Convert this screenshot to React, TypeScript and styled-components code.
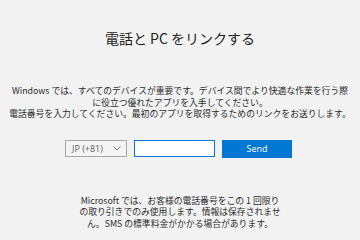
import React from 'react';
import styled, { createGlobalStyle } from 'styled-components';

const GlobalStyle = createGlobalStyle`
  html, body {
    margin: 0;
    padding: 0;
    background: #f2f2f2;
  }
  body {
    font-family: "Noto Sans CJK JP", "Noto Sans", sans-serif;
    color: #262626;
  }
`;

const Page = styled.div`
  width: 360px;
  height: 240px;
  display: flex;
  flex-direction: column;
  align-items: center;
  box-sizing: border-box;
  padding-top: 29px;
  overflow: hidden;
`;

const Title = styled.h1`
  margin: 0;
  font-size: 14px;
  line-height: 18px;
  font-weight: 400;
  color: #1f1f1f;
`;

const Intro = styled.p`
  margin: 38px 0 0;
  width: 356px;
  font-size: 8.8px;
  line-height: 11.5px;
  text-align: center;
  color: #2b2b2b;
`;

const Form = styled.div`
  display: flex;
  align-items: flex-start;
  gap: 7px;
  margin-top: 20px;
  margin-left: -3px;
`;

const Select = styled.div`
  box-sizing: border-box;
  width: 62px;
  height: 17px;
  border: 1px solid #a6a6a6;
  background: #f4f4f4;
  display: flex;
  align-items: center;
  justify-content: space-between;
  padding: 0 5px 0 6px;
  font-family: "Open Sans", "Noto Sans", sans-serif;
  font-size: 9px;
  color: #5c5c5c;
`;

const Input = styled.input`
  box-sizing: border-box;
  width: 81px;
  height: 17px;
  border: 1.5px solid #0078d4;
  background: #fff;
  outline: none;
  padding: 0;
  margin: 0;
`;

const SendButton = styled.button`
  box-sizing: border-box;
  width: 70px;
  height: 18px;
  border: none;
  background: #0078d4;
  color: #fff;
  font-family: "Open Sans", "Noto Sans", sans-serif;
  font-size: 9px;
  padding: 0;
  margin: 0;
`;

const Notice = styled.p`
  margin: 37px 0 0;
  width: 240px;
  font-size: 8.8px;
  line-height: 11.5px;
  text-align: center;
  color: #2b2b2b;
`;

const Chevron = () => (
  <svg width="8" height="5" viewBox="0 0 8 5">
    <polyline points="0.5,0.5 4,4 7.5,0.5" fill="none" stroke="#7a7a7a" strokeWidth="1" />
  </svg>
);

export default function App() {
  return (
    <>
      <GlobalStyle />
      <Page>
        <Title>電話と PC をリンクする</Title>
        <Intro>
          Windows では、すべてのデバイスが重要です。デバイス間でより快適な作業を行う際
          <br />
          に役立つ優れたアプリを入手してください。
          <br />
          電話番号を入力してください。最初のアプリを取得するためのリンクをお送りします。
        </Intro>
        <Form>
          <Select>
            <span>JP (+81)</span>
            <Chevron />
          </Select>
          <Input type="tel" />
          <SendButton>Send</SendButton>
        </Form>
        <Notice>
          Microsoft では、お客様の電話番号をこの 1 回限り
          <br />
          の取り引きでのみ使用します。情報は保存されませ
          <br />
          ん。SMS の標準料金がかかる場合があります。
        </Notice>
      </Page>
    </>
  );
}
